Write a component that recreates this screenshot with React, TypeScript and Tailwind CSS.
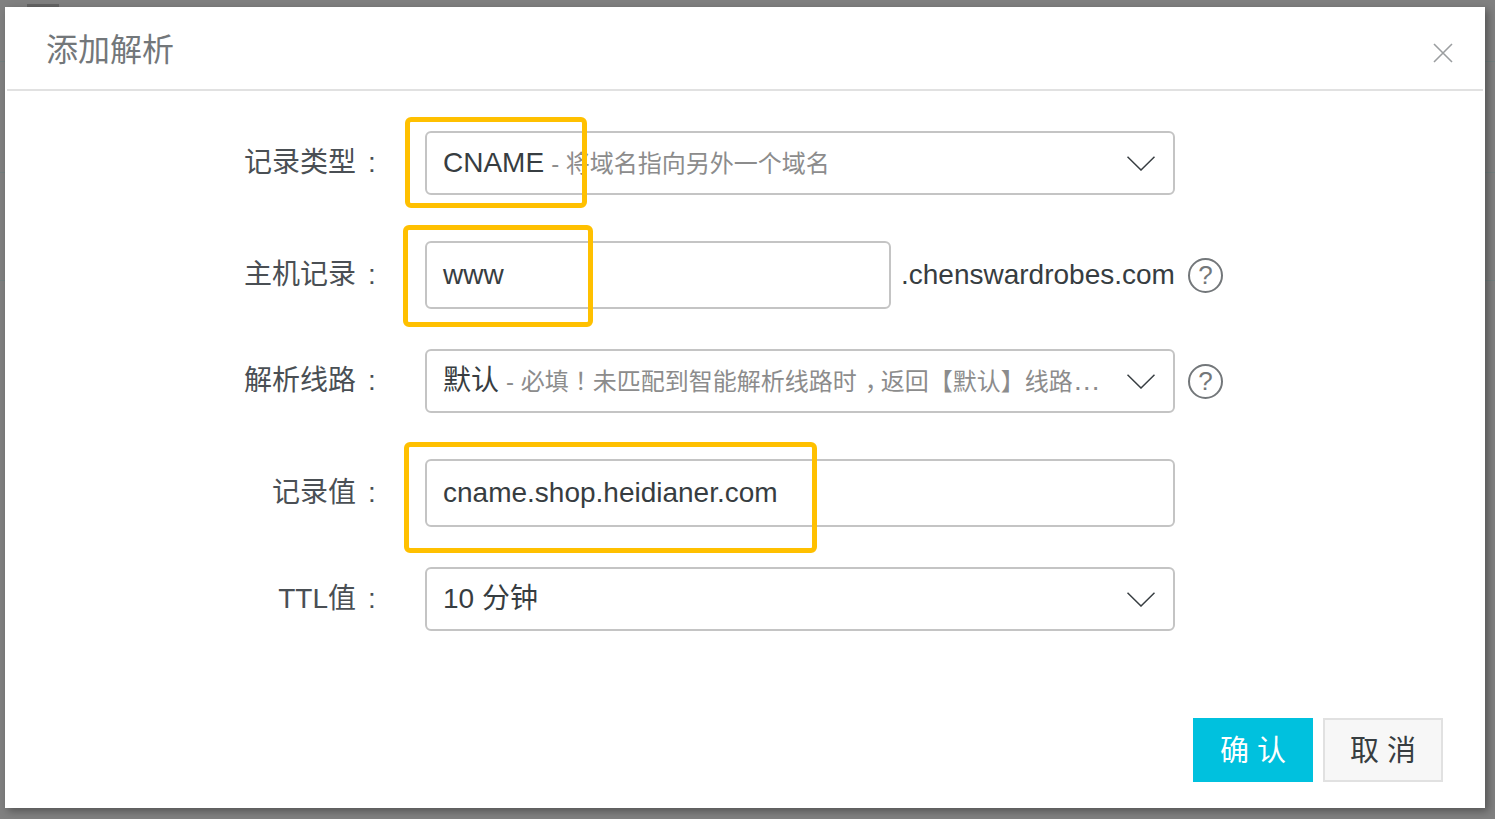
import type { ReactNode } from "react";

const font = "font-['Liberation_Sans','Noto_Sans_CJK_SC',sans-serif]";
const tc = "font-['Noto_Sans_CJK_TC',sans-serif]";

function Label({ text }: { text: string }) {
  return (
    <div className="flex w-[420px] shrink-0 justify-end pr-[46px] text-[28px] leading-none text-[#4a4f54]">
      <span>{text}</span>
      <span className="ml-[12px] w-[11px]">:</span>
    </div>
  );
}

function Chevron() {
  return (
    <svg className="ml-auto shrink-0" width="28" height="15" viewBox="0 0 28 15" fill="none">
      <polyline points="0.5,0.7 14,14 27.5,0.7" stroke="#373d41" strokeWidth="1.5" />
    </svg>
  );
}

function Select({ value, hint }: { value: string; hint?: ReactNode }) {
  return (
    <div className="flex h-[64px] w-[750px] items-center rounded-[6px] border-2 border-[#c4c4c4] pl-[16px] pr-[18px]">
      <div className="min-w-0 flex-1 truncate pr-[26px] text-[28px] text-[#8c8c8c]">
        <span className="text-[#373d41]">{value}</span>
        {hint && <span className="ml-[7px] text-[24px]">- {hint}</span>}
      </div>
      <Chevron />
    </div>
  );
}

function Input({ value, width }: { value: string; width: string }) {
  return (
    <div className={`flex h-[68px] items-center rounded-[6px] border-2 border-[#c4c4c4] pl-[16px] text-[28px] text-[#373d41] ${width}`}>
      {value}
    </div>
  );
}

function Help() {
  return (
    <div className="ml-[13px] flex h-[35px] w-[35px] shrink-0 items-center justify-center rounded-full border-2 border-[#73777a] text-[26px] leading-none text-[#73777a]">
      ?
    </div>
  );
}

export default function App() {
  return (
    <div className={`relative h-[819px] w-[1495px] overflow-hidden bg-[#808080] pl-[5px] pt-[7px] ${font}`}>
      {/* page behind the overlay */}
      <div className="absolute left-[27px] top-[4px] h-[3px] w-[32px] bg-[#646464]" />
      <div className="absolute inset-x-0 top-[61px] h-px bg-[#748080]" />
      <div className="absolute inset-x-0 top-[172px] h-px bg-[#748080]" />
      <div className="absolute inset-x-0 top-[280px] h-px bg-[#748080]" />

      {/* modal */}
      <div className="relative flex h-[801px] w-[1480px] flex-col bg-white shadow-[3px_3px_8px_rgba(0,0,0,0.35)]">
        <div className="ml-[2px] mr-[2px] flex h-[84px] items-center justify-between border-b-2 border-[#e1e1e1] pl-[39px] pr-[30px] pt-[4px]">
          <span className="text-[32px] leading-none text-[#73777a]">添加解析</span>
          <svg className="mt-[6px]" width="20" height="20" viewBox="0 0 20 20" fill="none">
            <path d="M1 1 L19 19 M19 1 L1 19" stroke="#9b9ea0" strokeWidth="1.6" />
          </svg>
        </div>

        <div className="flex flex-col pt-[40px]">
          <div className="flex items-center">
            <Label text="记录类型" />
            <Select value="CNAME" hint="将域名指向另外一个域名" />
          </div>
          <div className="mt-[46px] flex items-center">
            <Label text="主机记录" />
            <Input value="www" width="w-[466px]" />
            <span className="ml-[10px] text-[28px] text-[#373d41]">.chenswardrobes.com</span>
            <Help />
          </div>
          <div className="mt-[40px] flex items-center">
            <Label text="解析线路" />
            <Select
              value="默认"
              hint={
                <>
                  必填<span className={tc}>！</span>未匹配到智能解析线路时
                  <span className="inline-block w-[24px] pl-[8px]">，</span>返回【默认】线路，设置默认线路
                </>
              }
            />
            <Help />
          </div>
          <div className="mt-[46px] flex items-center">
            <Label text="记录值" />
            <Input value="cname.shop.heidianer.com" width="w-[750px]" />
          </div>
          <div className="mt-[40px] flex items-center">
            <Label text="TTL值" />
            <Select value="10 分钟" />
          </div>
        </div>

        <div className="mt-auto flex justify-end gap-[10px] pb-[26px] pr-[42px]">
          <button className="h-[64px] w-[120px] bg-[#00c1de] pt-[4px] text-[29px] text-white">确 认</button>
          <button className="h-[64px] w-[120px] border-2 border-[#e1e1e1] bg-[#f7f7f7] pt-[4px] text-[29px] text-[#373d41]">取 消</button>
        </div>
      </div>

      {/* annotation boxes drawn on top of the screenshot */}
      <div className="absolute left-[405px] top-[117px] h-[91px] w-[182px] rounded-[6px] border-[5px] border-[#ffc000]" />
      <div className="absolute left-[403px] top-[225px] h-[102px] w-[190px] rounded-[6px] border-[5px] border-[#ffc000]" />
      <div className="absolute left-[404px] top-[442px] h-[111px] w-[413px] rounded-[6px] border-[5px] border-[#ffc000]" />
    </div>
  );
}
